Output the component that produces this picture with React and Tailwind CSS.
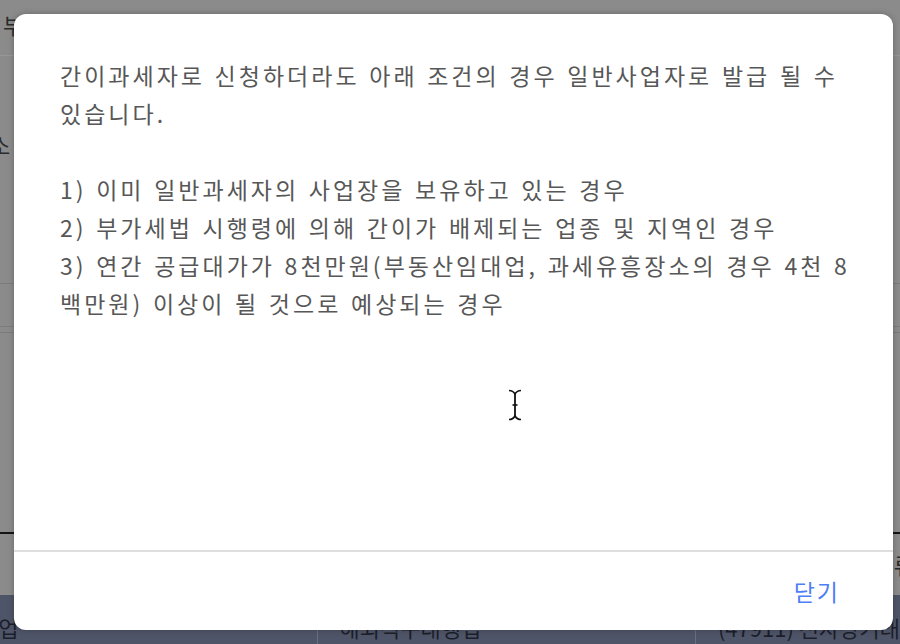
const FONT = "font-['Noto_Sans_CJK_KR','Noto_Sans',sans-serif]";

// \u200B lets the line break between "8" and "백만원", as in the screenshot
const NOTICE = `간이과세자로 신청하더라도 아래 조건의 경우 일반사업자로 발급 될 수 있습니다.

1) 이미 일반과세자의 사업장을 보유하고 있는 경우
2) 부가세법 시행령에 의해 간이가 배제되는 업종 및 지역인 경우
3) 연간 공급대가가 8천만원(부동산임대업, 과세유흥장소의 경우 4천 8\u200B백만원) 이상이 될 것으로 예상되는 경우`;

// I-beam mouse cursor shown in the screenshot
const TextCursor = () => (
  <svg width="14" height="32" viewBox="0 0 14 32" fill="none">
    <path d="M1 1.5 Q5 1.5 7 5 Q9 1.5 13 1.5" stroke="#111" strokeWidth="1.6" />
    <path d="M7 5 V27" stroke="#111" strokeWidth="1.8" />
    <path d="M4.5 16 H9.5" stroke="#111" strokeWidth="1.6" />
    <path d="M1 30.5 Q5 30.5 7 27 Q9 30.5 13 30.5" stroke="#111" strokeWidth="1.6" />
  </svg>
);

const Backdrop = () => (
  <div className={`flex h-full flex-col bg-[#8b8b8b] text-[22px] text-[#2b2b2b] ${FONT}`}>
    <div className="flex h-[57px] items-start border-b border-[#979797] pt-[8px]">
      <span className="ml-[3px]">부</span>
    </div>
    <div className="flex h-[230px] items-start border-b border-[#7c7c7c] pt-[72px]">
      <span className="ml-[-10px]">소</span>
    </div>
    <div className="h-[43px] border-b border-[#7c7c7c]" />
    <div className="h-[7px] border-b border-[#7c7c7c]" />
    <div className="h-[203px] border-b-2 border-[#151515]" />
    <div className="flex h-[62px] items-start justify-end pt-[14px]">
      <span className="mr-[-14px]">류</span>
    </div>
    <div className="flex flex-1 items-start bg-[#4f5568] pt-[16px] text-[#1c1f2b]">
      <div className="w-[318px] border-r border-[#6b6f7c]">
        <span className="ml-[-22px]">사업</span>
      </div>
      <div className="w-[379px] border-r border-[#6b6f7c] pl-[22px]">해외직구대행업</div>
      <div className="whitespace-nowrap pl-[22px]">(47911) 전자상거래</div>
    </div>
  </div>
);

export default function App() {
  return (
    <div className="relative h-[644px] w-[900px] overflow-hidden">
      <Backdrop />

      {/* modal */}
      <div className="absolute inset-0 p-[14px] pr-[7px]">
        <div className={`flex h-full flex-col rounded-[12px] bg-white shadow-[0_0_6px_rgba(0,0,0,0.25)] ${FONT}`}>
          <div className="relative flex-1 pl-[46px] pr-[36px] pt-[42px]">
            <p className="whitespace-pre-line break-keep text-[23px] leading-[38px] tracking-[3px] [word-spacing:1.5px] text-[#575757]">
              {NOTICE}
            </p>
            <div className="absolute left-[494px] top-[375px]">
              <TextCursor />
            </div>
          </div>
          <div className="flex h-[80px] items-center justify-end border-t-2 border-[#dedede] pr-[53px]">
            <button className="text-[23px] tracking-[2px] text-[#4f7ff6]">닫기</button>
          </div>
        </div>
      </div>
    </div>
  );
}
